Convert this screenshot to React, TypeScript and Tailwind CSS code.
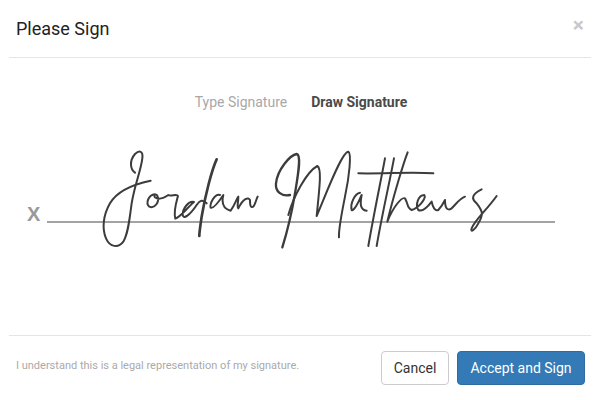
import React from "react";

function SignatureInk() {
  return (
    <svg
      className="absolute left-0 top-0 w-[600px] h-[130px]"
      viewBox="0 140 600 130"
      fill="none"
      stroke="#3c3c3c"
      strokeLinecap="round"
      strokeLinejoin="round"
      aria-label="Drawn signature"
    >
      <g transform="translate(20 140) scale(0.3333)" strokeWidth="6">
        <path d="M345 98 C330 88 328 62 345 42 C358 30 370 32 367 55 C362 95 345 130 335 190 C328 240 325 280 310 305 C295 325 270 322 258 295 C245 265 250 225 270 190 C290 155 330 135 392 122" />
        <path d="M405 163 C385 165 376 190 388 200 C405 207 420 185 412 167 C408 160 400 165 405 172 C415 180 430 175 445 165 C452 170 472 160 474 168 C468 190 460 215 466 236 C480 232 500 205 522 186 C506 182 488 205 488 225 C490 240 510 225 530 195 C540 180 548 178 560 190" />
        <path d="M590 58 C575 90 555 170 545 230 C541 260 538 275 538 288" strokeWidth="8" />
        <path d="M600 165 C585 160 568 190 572 203 C580 208 600 180 610 165 C605 185 605 205 632 212 C645 195 650 175 655 170 C655 190 650 200 655 205 C670 175 685 170 690 180 C690 190 690 205 700 200 C705 195 708 180 713 170" />
      </g>
      <g transform="translate(270 140) scale(0.3333)" strokeWidth="6">
        <path d="M60 165 C35 170 15 155 18 130 C22 90 60 45 80 42 C95 45 85 100 75 160 C65 220 50 280 37 322" strokeWidth="7" />
        <path d="M55 225 C70 170 110 95 142 78 C155 85 150 130 140 228 C165 170 215 35 235 35 C245 40 238 110 225 170 C215 220 205 270 207 292" />
        <path d="M270 158 C255 160 240 190 245 210 C250 215 265 190 275 165 C270 190 270 210 290 212" />
        <path d="M345 55 C335 110 310 230 295 318" />
        <path d="M372 55 C360 120 335 230 320 318" />
        <path d="M413 37 C400 70 370 170 352 245 C370 200 395 170 405 175 C415 190 410 205 425 210 C445 205 470 175 463 165 C445 165 435 195 445 210 C455 215 470 205 485 185 C488 200 495 215 505 210 C515 200 520 190 525 180 C525 200 530 215 545 205 C560 190 570 175 585 170" />
        <path d="M635 148 C610 160 600 175 620 190 C640 215 640 225 625 250 C615 270 600 280 605 265 C615 240 650 210 680 168" />
        <path d="M265 100 C340 102 420 95 490 100" />
      </g>
    </svg>
  );
}

export default function App() {
  return (
    <div className="flex flex-col w-[600px] h-[400px] overflow-hidden bg-white font-['Roboto',sans-serif]">
      <div className="flex justify-between mx-[9px] h-[58px] pl-[7px] pr-[7px] border-b border-[#e5e5e5]">
        <h4 className="mt-[19px] text-[18px] leading-[20px] text-[#222]">Please Sign</h4>
        <button type="button" className="mt-[15px] h-[20px] text-[21px] leading-[20px] font-bold text-[#c9c9c9]">
          ×
        </button>
      </div>

      <div className="flex-1 flex flex-col">
        <div className="flex justify-center gap-6 mt-[36px] ml-[2px] text-[14px] leading-[16px]">
          <span className="text-[#a8a8a8]">Type Signature</span>
          <span className="font-bold text-[#4a4a4a]">Draw Signature</span>
        </div>
        <div className="relative h-[130px] mt-[30px]">
          <div className="flex items-end h-[84px] pl-[27px] pr-[45px]">
            <span className="w-[20px] text-[20px] leading-[20px] font-bold text-[#999] font-['Liberation_Sans',sans-serif]">
              X
            </span>
            <div className="flex-1 h-[2px] mb-[1px] bg-[#a3a3a3]" />
          </div>
          <SignatureInk />
        </div>
      </div>

      <div className="flex items-center justify-between mx-[9px] h-[65px] pl-[7px] pr-[6px] border-t border-[#e5e5e5]">
        <p className="mb-[5px] text-[11px] leading-[14px] text-[#aaa]">
          I understand this is a legal representation of my signature.
        </p>
        <div className="flex gap-2">
          <button type="button" className="w-[68px] h-[34px] text-[14px] text-[#333] bg-white border border-[#ccc] rounded">
            Cancel
          </button>
          <button type="button" className="w-[128px] h-[34px] text-[14px] text-white bg-[#337ab7] border border-[#2e6da4] rounded">
            Accept and Sign
          </button>
        </div>
      </div>
    </div>
  );
}
